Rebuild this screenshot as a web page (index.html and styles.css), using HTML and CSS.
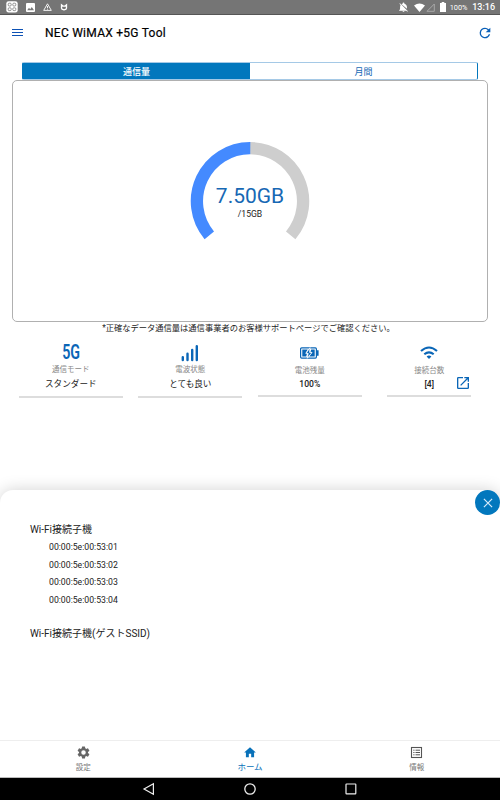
FILE: index.html
```html
<!DOCTYPE html>
<html lang="ja">
<head>
  <meta charset="UTF-8">
  <title>NEC WiMAX +5G Tool</title>
  <meta name="viewport" content="width=device-width, initial-scale=1.0">
  <link rel="stylesheet" href="styles.css">
</head>
<body>
  <div class="status-bar">
    <div class="status-left">
      <svg width="12" height="12" viewBox="0 0 12 12">
        <rect x="0.3" y="0.2" width="11.4" height="11.4" rx="2.4" fill="#fff"/>
        <g fill="none" stroke="#777" stroke-width="0.8">
          <rect x="2.2" y="2.2" width="3" height="2.8" rx="1"/>
          <rect x="6.8" y="2.2" width="3" height="2.8" rx="1"/>
          <rect x="2.2" y="6.8" width="3" height="2.8" rx="1"/>
          <rect x="6.8" y="6.8" width="3" height="2.8" rx="1"/>
        </g>
      </svg>
      <svg width="9" height="9" viewBox="0 0 9 9">
        <rect width="9" height="9" rx="1" fill="#fff"/>
        <path d="M1.2 7.2 3 4.8 4.2 6.2 5.8 4 8 7.2z" fill="#777"/>
      </svg>
      <svg width="9" height="8" viewBox="0 0 9 8">
        <path d="M4.5.8 8.3 7.4H.7z" fill="none" stroke="#fff" stroke-width="0.9"/>
        <path d="M4.5 3v2M4.5 5.7v.9" stroke="#fff" stroke-width="0.9"/>
      </svg>
      <svg width="8" height="8" viewBox="0 0 8 8">
        <path d="M1.5 1.9v3.300q0 1.200 2.500 1.700 2.500-.5 2.500-1.700V1.900L5 3.100H3z" fill="none" stroke="#fff" stroke-width="1.3"/>
      </svg>
    </div>
    <div class="status-right">
      <svg width="11" height="11" viewBox="0 0 24 24">
        <path d="M20 18.7 7.8 6.1 4.3 2.5 3 3.8l2.8 2.8C4.9 7.8 4.5 9.3 4.5 11v5l-2 2v1h15.7l2 2 1.3-1.3zM12 22a2 2 0 0 0 2-2h-4a2 2 0 0 0 2 2zM19.5 14.7V11c0-3.6-2-6.4-5.500-7.200V3a2 2 0 0 0-4 0v.8c-.8.2-1.500.5-2.200.9z" fill="#fff"/>
      </svg>
      <svg class="wifi-status" width="11" height="9" viewBox="0 0 11 9">
        <path d="M0 2.4Q5.5-1.2 11 2.4L5.500 9z" fill="#fff"/>
      </svg>
      <svg class="cell" width="9" height="9" viewBox="0 0 9 9">
        <path d="M8.3 1v7.3H1z" fill="none" stroke="#a8a8a8" stroke-width="1"/>
      </svg>
      <svg class="batt" width="6" height="10" viewBox="0 0 6 10">
        <path d="M1.7 0h2.6v1H6v9H0V1h1.700z" fill="#fff"/>
      </svg>
      <span class="percent">100%</span>
      <span class="clock">13:16</span>
    </div>
  </div>

  <header class="app-bar">
    <svg width="11" height="7" viewBox="0 0 11 7">
      <path d="M0 .5h11M0 3.5h11M0 6.5h11" stroke="#0d52b5" stroke-width="1"/>
    </svg>
    <h1>NEC WiMAX +5G Tool</h1>
    <svg class="refresh" width="16" height="16" viewBox="0 0 24 24">
      <path d="M17.65 6.35A7.96 7.96 0 0 0 12 4a8 8 0 1 0 7.73 10h-2.08A6 6 0 1 1 12 6c1.66 0 3.14.69 4.22 1.78L13 11h7V4z" fill="#0a60b8"/>
    </svg>
  </header>

  <main>
    <div class="tabs">
      <div class="tab active">通信量</div>
      <div class="tab">月間</div>
    </div>

    <section class="usage">
      <div class="gauge">
        <svg width="120" height="120" viewBox="0 0 120 120">
          <path d="M60 7.15A53.1 53.1 0 0 1 100.7 94.35" fill="none" stroke="#cecece" stroke-width="12.3"/>
          <path d="M19.3 94.35A53.1 53.1 0 0 1 60.3 7.15" fill="none" stroke="#448aff" stroke-width="12.3"/>
        </svg>
        <div class="gauge-text">
          <div class="used">7.50GB</div>
          <div class="limit">/15GB</div>
        </div>
      </div>
    </section>
    <p class="note">*正確なデータ通信量は通信事業者のお客様サポートページでご確認ください。</p>

    <div class="metrics">
      <div class="metric">
        <div class="icon">
          <span class="mode">5G</span>
        </div>
        <div class="label">通信モード</div>
        <div class="value">スタンダード</div>
      </div>
      <div class="metric">
        <div class="icon">
          <svg width="18" height="18" viewBox="0 0 18 18">
            <path d="M1.8 16.1v-2.8M6.5 16.1V9.8M11.2 16.1V6M15.8 16.1V2.3" stroke="#0a66b7" stroke-width="2.4" stroke-linecap="round"/>
          </svg>
        </div>
        <div class="label">電波状態</div>
        <div class="value">とても良い</div>
      </div>
      <div class="metric low">
        <div class="icon">
          <svg width="19" height="12" viewBox="0 0 19 12">
            <rect x=".6" y=".9" width="15.8" height="10.2" rx="1" fill="none" stroke="#0a66b7" stroke-width="1.2"/>
            <path d="M17 3.3h1.6v5.4H17zM2.3 2.6h5.4L5.2 6.600H7l-.8 2.800H2.300zM11.200 2.600h3.500v6.800H9.300l3-4.200h-1.900z" fill="#0a66b7"/>
            <path d="M10 .7 6.100 6.300h2.100l-.9 5L12 5.400H9.600z" fill="#0a66b7" stroke="#fff" stroke-width=".8"/>
          </svg>
        </div>
        <div class="label">電池残量</div>
        <div class="value">100%</div>
      </div>
      <div class="metric low devices">
        <div class="icon">
          <svg width="18" height="14" viewBox="0 0 18 14">
            <path d="M1 5Q9-2 17 5M4.3 8.3q4.7-4 9.4 0" fill="none" stroke="#0a66b7" stroke-width="2.1"/>
            <path d="M6.6 10.4q2.4-1.6 4.8 0L9 13z" fill="#0a66b7"/>
          </svg>
        </div>
        <div class="label">接続台数</div>
        <div class="value">[4]</div>
        <svg class="open" width="16" height="16" viewBox="0 0 24 24">
          <path d="M19 19H5V5h7V3H5a2 2 0 0 0-2 2v14a2 2 0 0 0 2 2h14a2 2 0 0 0 2-2v-7h-2zM14 3v2h3.59l-9.830 9.830 1.410 1.410L19 6.410V10h2V3z" fill="#0a66b7"/>
        </svg>
      </div>
    </div>
  </main>

  <section class="sheet">
    <div class="close">
      <svg width="10" height="10" viewBox="0 0 10 10">
        <path d="M.9.9l8.2 8.2M9.100.9.9 9.100" stroke="#d5eafa" stroke-width="1.2"/>
      </svg>
    </div>
    <h2>Wi-Fi接続子機</h2>
    <ul>
      <li>00:00:5e:00:53:01</li>
      <li>00:00:5e:00:53:02</li>
      <li>00:00:5e:00:53:03</li>
      <li>00:00:5e:00:53:04</li>
    </ul>
    <h2>Wi-Fi接続子機(ゲストSSID)</h2>
  </section>

  <nav class="bottom-nav">
    <div class="nav-item">
      <svg width="15" height="15" viewBox="0 0 24 24">
        <path d="M19.14 12.94a7 7 0 0 0 0-1.88l2.03-1.58a.5.5 0 0 0 .12-.61l-1.92-3.32a.5.5 0 0 0-.59-.22l-2.39.96a7 7 0 0 0-1.62-.94l-.36-2.54a.5.5 0 0 0-.48-.41h-3.84a.5.5 0 0 0-.47.41l-.36 2.54a7.3 7.3 0 0 0-1.62.94l-2.39-.96a.5.5 0 0 0-.59.22L2.74 8.87a.5.5 0 0 0 .12.61l2.03 1.58a7 7 0 0 0 0 1.88l-2.03 1.58a.5.5 0 0 0-.12.61l1.92 3.32c.12.22.37.29.59.22l2.39-.96c.5.38 1.03.7 1.62.94l.36 2.54c.05.24.24.41.48.41h3.84c.24 0 .44-.17.47-.41l.36-2.54a7 7 0 0 0 1.62-.94l2.39.96c.22.08.47 0 .59-.22l1.92-3.32a.5.5 0 0 0-.12-.61zM12 15.6a3.6 3.6 0 1 1 0-7.2 3.6 3.6 0 0 1 0 7.2z" fill="#666"/>
      </svg>
      <span>設定</span>
    </div>
    <div class="nav-item active">
      <svg width="14" height="15" viewBox="0 0 24 24">
        <path d="M10 20v-6h4v6h5v-8h3L12 3 2 12h3v8z" fill="#0871b9"/>
      </svg>
      <span>ホーム</span>
    </div>
    <div class="nav-item">
      <svg width="15" height="15" viewBox="0 0 15 15">
        <rect x="2.5" y="2.5" width="10" height="10" fill="none" stroke="#555" stroke-width="1.1"/>
        <path d="M4.3 5.2h1.2M4.3 7.5h1.2M4.3 9.8h1.2M6.5 5.2h4.5M6.5 7.5h4.5M6.5 9.8h4.5" stroke="#555" stroke-width="1"/>
      </svg>
      <span>情報</span>
    </div>
  </nav>

  <div class="system-nav">
    <svg width="14" height="14" viewBox="0 0 14 14">
      <path d="M11.4 1.7v10.6L2 7z" fill="none" stroke="#eee" stroke-width="1.2"/>
    </svg>
    <svg width="14" height="14" viewBox="0 0 14 14">
      <circle cx="7" cy="7" r="5.2" fill="none" stroke="#eee" stroke-width="1.3"/>
    </svg>
    <svg width="14" height="14" viewBox="0 0 14 14">
      <rect x="2" y="2" width="9.8" height="9.8" rx=".6" fill="none" stroke="#eee" stroke-width="1.2"/>
    </svg>
  </div>
</body>
</html>
```
FILE: styles.css
```css
* {
  box-sizing: border-box;
}

body {
  margin: 0;
  height: 800px;
  display: flex;
  flex-direction: column;
  overflow: hidden;
  font-family: Roboto, 'Noto Sans CJK JP', sans-serif;
  font-size: 9px;
  color: #222;
  background: #fff;
}

svg {
  display: block;
  flex: none;
}

h1, h2, p, ul {
  margin: 0;
  padding: 0;
  font-weight: normal;
}

.status-bar {
  height: 15px;
  flex: none;
  display: flex;
  justify-content: space-between;
  background: #757575;
  border-bottom: 1px solid #555;
  color: #fff;
}

.status-left,
.status-right {
  display: flex;
  align-items: center;
}

.status-left {
  padding-left: 6px;
  gap: 8px;
}

.status-right {
  padding-right: 5px;
}

.wifi-status {
  margin-left: 5px;
}

.cell {
  margin-left: 1px;
}

.batt {
  margin: 0 4px 0 5px;
}

.percent {
  font-size: 7.4px;
  width: 22.5px;
}

.clock {
  font-size: 9px;
  font-weight: 500;
}

.app-bar {
  height: 35px;
  flex: none;
  display: flex;
  align-items: center;
  padding: 0 7px 0 12px;
}

.app-bar h1 {
  margin-left: 22px;
  font-size: 12px;
  letter-spacing: 0.26px;
  color: #000;
  -webkit-text-stroke: 0.2px #000;
}

.refresh {
  margin-left: auto;
}

main {
  height: 440px;
  flex: none;
  padding: 12px 12px 0;
}

.tabs {
  display: flex;
  height: 18px;
  margin: 0 10px;
  border: 1px solid #0277bd;
  border-top-color: #a5c9e6;
  border-bottom-color: #a5c9e6;
  border-radius: 2px;
}

.tab {
  flex: 1;
  line-height: 18px;
  text-align: center;
  color: #1469b5;
}

.tab.active {
  background: #0277bd;
  color: #fff;
  font-weight: 500;
}

.usage {
  height: 242px;
  padding-top: 60px;
  border: 1px solid #b0b0b0;
  border-radius: 5px;
}

.gauge {
  width: 120px;
  margin: 0 auto;
  display: grid;
}

.gauge svg,
.gauge-text {
  grid-area: 1 / 1;
}

.gauge-text {
  padding-top: 43px;
  text-align: center;
}

.used {
  font-size: 21px;
  line-height: 25px;
  color: #1768b4;
}

.limit {
  font-size: 8.6px;
  line-height: 10px;
}

.note {
  padding-right: 3px;
  font-size: 8.27px;
  line-height: 13px;
  text-align: center;
}

.metrics {
  display: grid;
  grid-template-columns: 104px 104px 104px 84px;
  column-gap: 15.5px;
  margin: 8px 0 0 6.8px;
}

.metric {
  position: relative;
  height: 55px;
  border-bottom: 2px solid #ddd;
  text-align: center;
}

.metric.low {
  height: 54px;
}

.devices {
  margin-left: 10px;
  width: 84px;
}

.icon {
  height: 19px;
  display: flex;
  align-items: center;
  justify-content: center;
}

.mode {
  font-size: 21px;
  line-height: 19px;
  font-weight: 600;
  color: #0a66b7;
  transform: scaleX(0.68);
}

.label {
  padding-top: 1px;
  line-height: 13px;
  font-size: 7.5px;
  color: #888;
}

.low .label {
  padding-top: 2px;
}

.value {
  line-height: 16px;
  font-size: 8.6px;
}

.low .value {
  line-height: 14px;
  font-weight: 500;
}

/* sits over the value row */
.open {
  position: absolute;
  right: 0;
  top: 32px;
}

.sheet {
  position: relative;
  flex: 1;
  padding: 30px 30px 0;
  border-radius: 13px 13px 0 0;
  box-shadow: 0 0 16px rgba(0, 0, 0, 0.18);
}

.sheet h2 {
  font-size: 10px;
  line-height: 19px;
}

.sheet ul {
  list-style: none;
  margin: 0 0 15px 19px;
}

.sheet li {
  font-size: 8.7px;
  line-height: 17.5px;
}

.close {
  position: absolute;
  top: 0;
  right: 0;
  width: 25px;
  height: 25px;
  display: flex;
  align-items: center;
  justify-content: center;
  border-radius: 50%;
  background: #0277bd;
}

.bottom-nav {
  position: relative;
  height: 38px;
  flex: none;
  display: flex;
  background: #fff;
  border-top: 1px solid #eee;
  border-bottom: 1px solid #bbb;
}

.nav-item {
  flex: 1;
  display: flex;
  flex-direction: column;
  align-items: center;
  padding-top: 4px;
  font-size: 7.5px;
  line-height: 15px;
  color: #777;
}

.nav-item.active {
  font-size: 8.5px;
  color: #0871b9;
}

.system-nav {
  position: relative;
  height: 22px;
  flex: none;
  display: flex;
  align-items: center;
  justify-content: center;
  gap: 87px;
  background: #000;
}
```
